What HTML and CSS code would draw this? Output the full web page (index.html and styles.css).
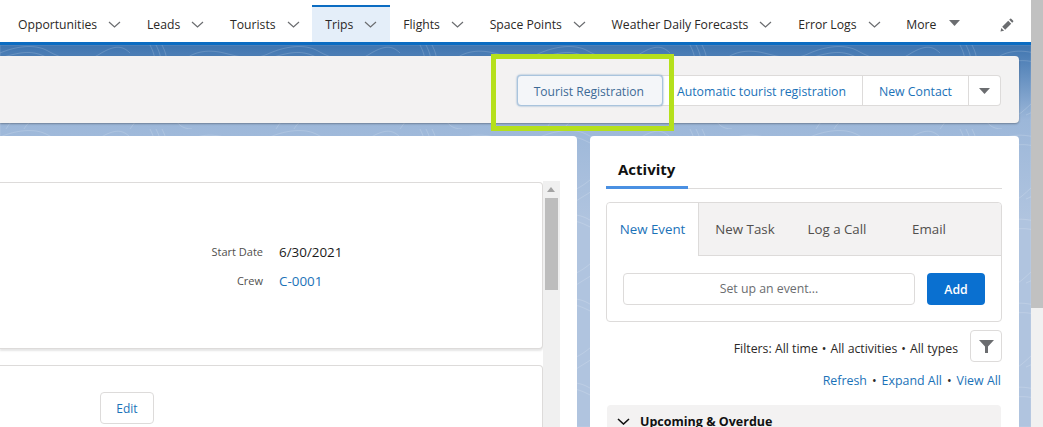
FILE: index.html
```html
<!DOCTYPE html>
<html lang="en">
<head>
    <meta charset="UTF-8">
    <meta name="viewport" content="width=device-width, initial-scale=1.0">
    <title>Trip</title>
    <link rel="stylesheet" href="styles.css">
</head>
<body>
    <div class="page">
        <!-- contour lines behind the panels -->
        <svg class="topo" width="1031" height="382">
            <defs>
                <pattern id="contours" width="270" height="84" patternUnits="userSpaceOnUse">
                    <path d="M0 8C14 2 34-2 48 6S82 20 98 10 122 0 130 8M0 13C18 8 30 4 46 12S84 26 100 16M150 0c4 8 6 14 4 24M156 0c4 8 6 14 4 24M162 0c4 8 6 14 3 24M180 20c10-14 28-16 44-12s30 8 46 0M186 26c12-12 28-12 42-8s28 6 42-2"/>
                    <path d="M6 84c8-14 20-18 34-26s20-20 34-16 22 26 40 22 26-24 44-20 16 30 36 30 24-20 42-22 20 10 34 12M24 84c6-10 16-14 28-22s18-14 28-10 20 24 38 22M130 84c10-14 18-24 32-22s10 22 30 22M216 70c10-4 26-16 54-4"/>
                </pattern>
            </defs>
            <rect width="1031" height="382" fill="url(#contours)"/>
        </svg>
        <nav class="nav-bar">
            <a class="nav-item">Opportunities <svg class="chev" viewBox="0 0 13 7"><path d="M1 1l5.500 5 5.500-5"/></svg></a>
            <a class="nav-item">Leads <svg class="chev" viewBox="0 0 13 7"><path d="M1 1l5.500 5 5.500-5"/></svg></a>
            <a class="nav-item">Tourists <svg class="chev" viewBox="0 0 13 7"><path d="M1 1l5.500 5 5.500-5"/></svg></a>
            <a class="nav-item nav-active">Trips <svg class="chev" viewBox="0 0 13 7"><path d="M1 1l5.500 5 5.500-5"/></svg></a>
            <a class="nav-item">Flights <svg class="chev" viewBox="0 0 13 7"><path d="M1 1l5.500 5 5.500-5"/></svg></a>
            <a class="nav-item">Space Points <svg class="chev" viewBox="0 0 13 7"><path d="M1 1l5.500 5 5.500-5"/></svg></a>
            <a class="nav-item">Weather Daily Forecasts <svg class="chev" viewBox="0 0 13 7"><path d="M1 1l5.500 5 5.500-5"/></svg></a>
            <a class="nav-item">Error Logs <svg class="chev" viewBox="0 0 13 7"><path d="M1 1l5.500 5 5.500-5"/></svg></a>
            <a class="nav-item">More <svg class="tri" viewBox="0 0 11 6"><path d="M0 0h11L5.500 6z"/></svg></a>
            <svg class="pencil" viewBox="0 0 14 14"><path d="M.5 13.500l.8-3.600 2.800 2.800zM2.200 8.800l6-6 3 3-6 6zM9.200 1.800l1-1q.5-.4 1 0l2 2q.4.5 0 1l-1 1z"/></svg>
        </nav>
        <main class="content">
            <section class="actions-panel">
                <button class="action action-focus">Tourist Registration</button>
                <button class="action">Automatic tourist registration</button>
                <button class="action">New Contact</button>
                <button class="action action-menu"><svg class="tri" viewBox="0 0 11 6"><path d="M0 0h11L5.500 6z"/></svg></button>
            </section>
            <div class="columns">
                <section class="record-panel">
                    <div class="record-inner">
                        <div class="record-cards">
                            <div class="card card-details">
                                <div class="field"><span class="field-label">Start Date</span><span class="field-value">6/30/2021</span></div>
                                <div class="field"><span class="field-label">Crew</span><a class="field-value link">C-0001</a></div>
                            </div>
                            <div class="card card-next">
                                <button class="edit-btn">Edit</button>
                            </div>
                        </div>
                        <div class="inner-scroll">
                            <span class="arrow-up"></span>
                            <span class="inner-thumb"></span>
                        </div>
                    </div>
                </section>
                <aside class="activity-panel">
                    <div class="activity-tabs"><span class="activity-tab">Activity</span></div>
                    <div class="composer">
                        <div class="composer-tabs">
                            <span class="c-tab c-tab-active">New Event</span>
                            <span class="c-tab">New Task</span>
                            <span class="c-tab">Log a Call</span>
                            <span class="c-tab">Email</span>
                        </div>
                        <div class="composer-body">
                            <div class="fake-input">Set up an event...</div>
                            <button class="add-btn">Add</button>
                        </div>
                    </div>
                    <div class="filters">
                        <span class="filter-text">Filters: All time<span class="sep">•</span>All activities<span class="sep">•</span>All types</span>
                        <button class="filter-btn"><svg viewBox="0 0 15 13"><path d="M0 0h15L9 6.500V13H6V6.500z"/></svg></button>
                    </div>
                    <div class="links"><a class="link">Refresh</a><span class="sep">•</span><a class="link">Expand All</a><span class="sep">•</span><a class="link">View All</a></div>
                    <div class="upcoming">
                        <svg class="chev chev-dark" viewBox="0 0 13 7"><path d="M1 1l5.500 5 5.500-5"/></svg>
                        <span>Upcoming &amp; Overdue</span>
                    </div>
                </aside>
            </div>
        </main>
        <div class="highlight-box"></div>
        <div class="page-scroll"><span class="page-thumb"></span></div>
    </div>
</body>
</html>
```

FILE: styles.css
```css
* {
    box-sizing: border-box;
}
html, body {
    margin: 0;
    height: 100%;
    overflow: hidden;
}
body {
    font-family: 'Open Sans', 'Noto Sans', sans-serif;
    font-size: 12.300px;
    color: #2b2826;
}
.page {
    position: relative;
    height: 427px;
    background: linear-gradient(180deg, #3b72ae 42px, #9cb7d9 120px, #b0c4df 220px);
}
.topo {
    position: absolute;
    left: 0;
    top: 45px;
    fill: none;
    stroke: rgba(255, 255, 255, .16);
    stroke-width: 1;
}
.nav-bar {
    position: relative;
    display: flex;
    align-items: stretch;
    height: 45px;
    padding-left: 5px;
    padding-top: 5px;
    background: #fff;
    border-bottom: 3px solid #0b6cc2;
}
.nav-item {
    display: flex;
    align-items: center;
    gap: 11px;
    padding: 0 12.800px 0 13px;
    font-size: 12.200px;
    border-top: 2px solid transparent;
}
.nav-active {
    background: #e4eef9;
    border-top-color: #0b6cc2;
}
.chev {
    width: 13px;
    height: 7px;
    fill: none;
    stroke: #6b6d70;
    stroke-width: 1.200;
}
.tri {
    width: 11px;
    height: 6px;
    fill: #6b6d70;
}
.nav-item .tri {
    margin: -3px 0 0 2px;
}
.pencil {
    width: 14px;
    height: 14px;
    fill: #6b6d70;
    margin: 13px 29px 0 auto;
}
.content {
    position: relative;
    padding-right: 24px;
}
.actions-panel {
    display: flex;
    justify-content: flex-end;
    align-items: flex-start;
    height: 67px;
    margin-top: 11px;
    padding: 19px 18px 0 0;
    background: #f3f2f2;
    border-radius: 0 4px 4px 0;
    box-shadow: 0 1px 2px rgba(0, 0, 0, .3);
}
.action {
    height: 31px;
    padding: 2px 16px 0;
    font: inherit;
    color: #1b72b8;
    background: #fff;
    border: 1px solid #dddbda;
    border-left-width: 0;
}
.action:last-child {
    border-radius: 0 4px 4px 0;
}
.action-focus {
    position: relative;
    margin-right: -2px;
    padding: 2px 18px 0 16px;
    font-size: 12.100px;
    color: #3d6a96;
    background: #f4f6f9;
    border: 1px solid #a9c4dd;
    border-radius: 4px;
    box-shadow: 0 0 2px #6f9bc6;
}
.action-menu {
    display: flex;
    align-items: center;
    width: 32px;
    padding: 0 10px;
}
.columns {
    display: flex;
    gap: 13px;
    margin-top: 13px;
}
.record-panel {
    flex: 0 0 577px;
    height: 300px;
    padding-top: 46px;
    background: #fff;
    border-radius: 0 4px 0 0;
}
.record-inner {
    display: flex;
    padding-right: 17px;
}
.record-cards {
    flex: 1;
}
.card {
    background: #fff;
    border: 1px solid #dddbda;
    border-left: 0;
    border-radius: 0 4px 4px 0;
}
.card-details {
    height: 167px;
    padding-top: 54px;
    box-shadow: 0 2px 2px rgba(0, 0, 0, .1);
}
.field {
    display: flex;
    align-items: center;
    height: 29px;
}
.field-label {
    width: 263px;
    text-align: right;
    font-size: 11px;
    color: #514f4d;
}
.field-value {
    margin-left: 16px;
    font-size: 13.400px;
    color: #1a1a1a;
}
.link {
    color: #1b72b8;
}
.field-value.link {
    color: #1b72b8;
}
.card-next {
    height: 80px;
    margin-top: 16px;
    padding: 26px 0 0 100px;
}
.edit-btn {
    width: 54px;
    height: 32px;
    font: inherit;
    font-size: 12px;
    color: #1b72b8;
    background: #fff;
    border: 1px solid #dddbda;
    border-radius: 4px;
}
.inner-scroll {
    position: relative;
    flex: 0 0 17px;
    height: 250px;
    margin-top: -1px;
    background: #f0f0f0;
}
.arrow-up {
    position: absolute;
    left: 4px;
    top: 6px;
    border: 4px solid transparent;
    border-top: 0;
    border-bottom: 5px solid #a3a3a3;
}
.inner-thumb {
    position: absolute;
    left: 2px;
    top: 17px;
    width: 13px;
    height: 92px;
    background: #bdbdbd;
}
.activity-panel {
    flex: 1;
    height: 300px;
    padding: 16px 17px 0 16px;
    background: #fff;
    border-radius: 4px 4px 0 0;
}
.activity-tabs {
    height: 37px;
    border-bottom: 1px solid #dddbda;
}
.activity-tab {
    display: inline-block;
    width: 82px;
    height: 37px;
    padding: 7px 12px;
    font-size: 15px;
    font-weight: 700;
    color: #111;
    border-bottom: 3px solid #4a90e2;
}
.composer {
    margin-top: 13px;
    height: 120px;
    border: 1px solid #dddbda;
    border-radius: 4px;
}
.composer-tabs {
    display: flex;
    height: 53px;
    background: #f3f2f2;
    border-radius: 4px 4px 0 0;
    border-bottom: 1px solid #dddbda;
}
.c-tab {
    width: 92px;
    font-size: 13.300px;
    line-height: 52px;
    text-align: center;
    color: #514f4d;
}
.c-tab-active {
    height: 53px;
    color: #1b72b8;
    background: #fff;
    border-right: 1px solid #dddbda;
    border-radius: 4px 0 0 0;
}
.composer-body {
    display: flex;
    gap: 12px;
    padding: 17px 16px 0;
}
.fake-input {
    flex: 1;
    height: 32px;
    line-height: 30px;
    text-align: center;
    color: #6b6d70;
    border: 1px solid #dddbda;
    border-radius: 4px;
}
.add-btn {
    width: 58px;
    height: 32px;
    font: inherit;
    font-weight: 600;
    color: #fff;
    background: #0a70d0;
    border: 0;
    border-radius: 4px;
}
.filters {
    display: flex;
    justify-content: flex-end;
    align-items: center;
    gap: 12px;
    margin-top: 8px;
}
.filter-text {
    padding-top: 4px;
}
.sep {
    margin: 0 4px;
}
.filter-btn {
    display: flex;
    align-items: center;
    justify-content: center;
    width: 32px;
    height: 32px;
    padding: 0;
    background: #fff;
    border: 1px solid #dddbda;
    border-radius: 4px;
}
.filter-btn svg {
    width: 15px;
    height: 13px;
    fill: #6b6d70;
}
.links {
    margin-top: 10px;
    padding-right: 1px;
    font-size: 12.400px;
    text-align: right;
}
.links .sep {
    margin: 0 5px;
}
.upcoming {
    display: flex;
    align-items: center;
    gap: 10px;
    height: 32px;
    margin: 16px 1px 0;
    padding-left: 10px;
    font-size: 12.500px;
    font-weight: 700;
    color: #111;
    background: #f3f2f2;
    border-radius: 4px 4px 0 0;
}
.chev-dark {
    stroke: #111;
    stroke-width: 1.600;
}
.highlight-box {
    position: absolute;
    left: 491px;
    top: 54px;
    width: 183px;
    height: 77px;
    border: 5px solid #b5e01c;
    pointer-events: none;
}
.page-scroll {
    position: absolute;
    right: 0;
    top: 0;
    width: 12px;
    height: 427px;
    background: #f1f1f1;
}
.page-thumb {
    display: block;
    height: 308px;
    background: #c1c1c1;
}
```
